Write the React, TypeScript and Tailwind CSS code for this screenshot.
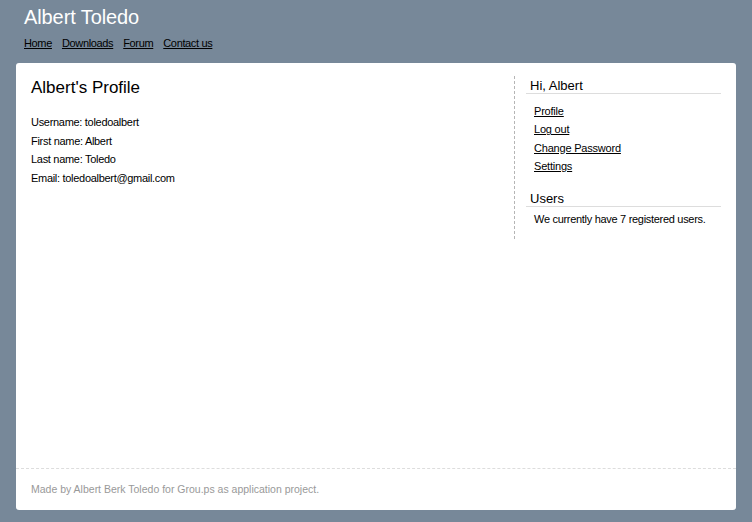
import React from "react";

const navLinks = ["Home", "Downloads", "Forum", "Contact us"];

const profileRows = [
  { label: "Username", value: "toledoalbert" },
  { label: "First name", value: "Albert" },
  { label: "Last name", value: "Toledo" },
  { label: "Email", value: "toledoalbert@gmail.com" },
];

const accountLinks = ["Profile", "Log out", "Change Password", "Settings"];

export default function App() {
  return (
    <div className="min-h-[522px] bg-[#778899] pt-[5px] pb-3 font-['Liberation_Sans',Arial,sans-serif] text-black">
      {/* Site header */}
      <header className="px-6">
        <h1 className="text-[20px] leading-[24px] text-white tracking-[-0.1px]">Albert Toledo</h1>
        <nav className="mt-2 flex gap-[10px] text-[11px] leading-[13px] tracking-[-0.35px]">
          {navLinks.map((link) => (
            <a key={link} href="#" className="underline text-black">
              {link}
            </a>
          ))}
        </nav>
      </header>

      {/* Page card */}
      <div className="mx-4 mt-[13px] rounded-[3px] bg-white">
        <div className="flex h-[405px] px-[15px] pt-[13px]">
          <main className="flex-1">
            <h2 className="mt-[2px] text-[17px] leading-[20px]">Albert's Profile</h2>
            <div className="mt-[15px] text-[11px] leading-[18.5px] tracking-[-0.3px]">
              {profileRows.map((row) => (
                <p key={row.label}>
                  {row.label}: {row.value}
                </p>
              ))}
            </div>
          </main>

          <aside className="w-[207px] self-start border-l border-dashed border-[#b5b5b5] pl-[11px] pt-[2px] pb-[11px]">
            <h3 className="border-b border-[#dddddd] pl-[4px] text-[13px] leading-[15px]">
              Hi, Albert
            </h3>
            <ul className="mt-[8px] pl-[8px] text-[11px] leading-[18.4px] tracking-[-0.2px]">
              {accountLinks.map((link) => (
                <li key={link}>
                  <a href="#" className="underline">
                    {link}
                  </a>
                </li>
              ))}
            </ul>

            <h3 className="mt-[15px] border-b border-[#dddddd] pl-[4px] text-[13px] leading-[15px]">
              Users
            </h3>
            <p className="mt-[3px] pl-[8px] text-[11px] leading-[18.5px] tracking-[-0.3px]">
              We currently have 7 registered users.
            </p>
          </aside>
        </div>

        <footer className="flex h-[42px] items-center border-t border-dashed border-[#dddddd] px-[15px] text-[10.5px] text-[#999999]">
          Made by Albert Berk Toledo for Grou.ps as application project.
        </footer>
      </div>
    </div>
  );
}
